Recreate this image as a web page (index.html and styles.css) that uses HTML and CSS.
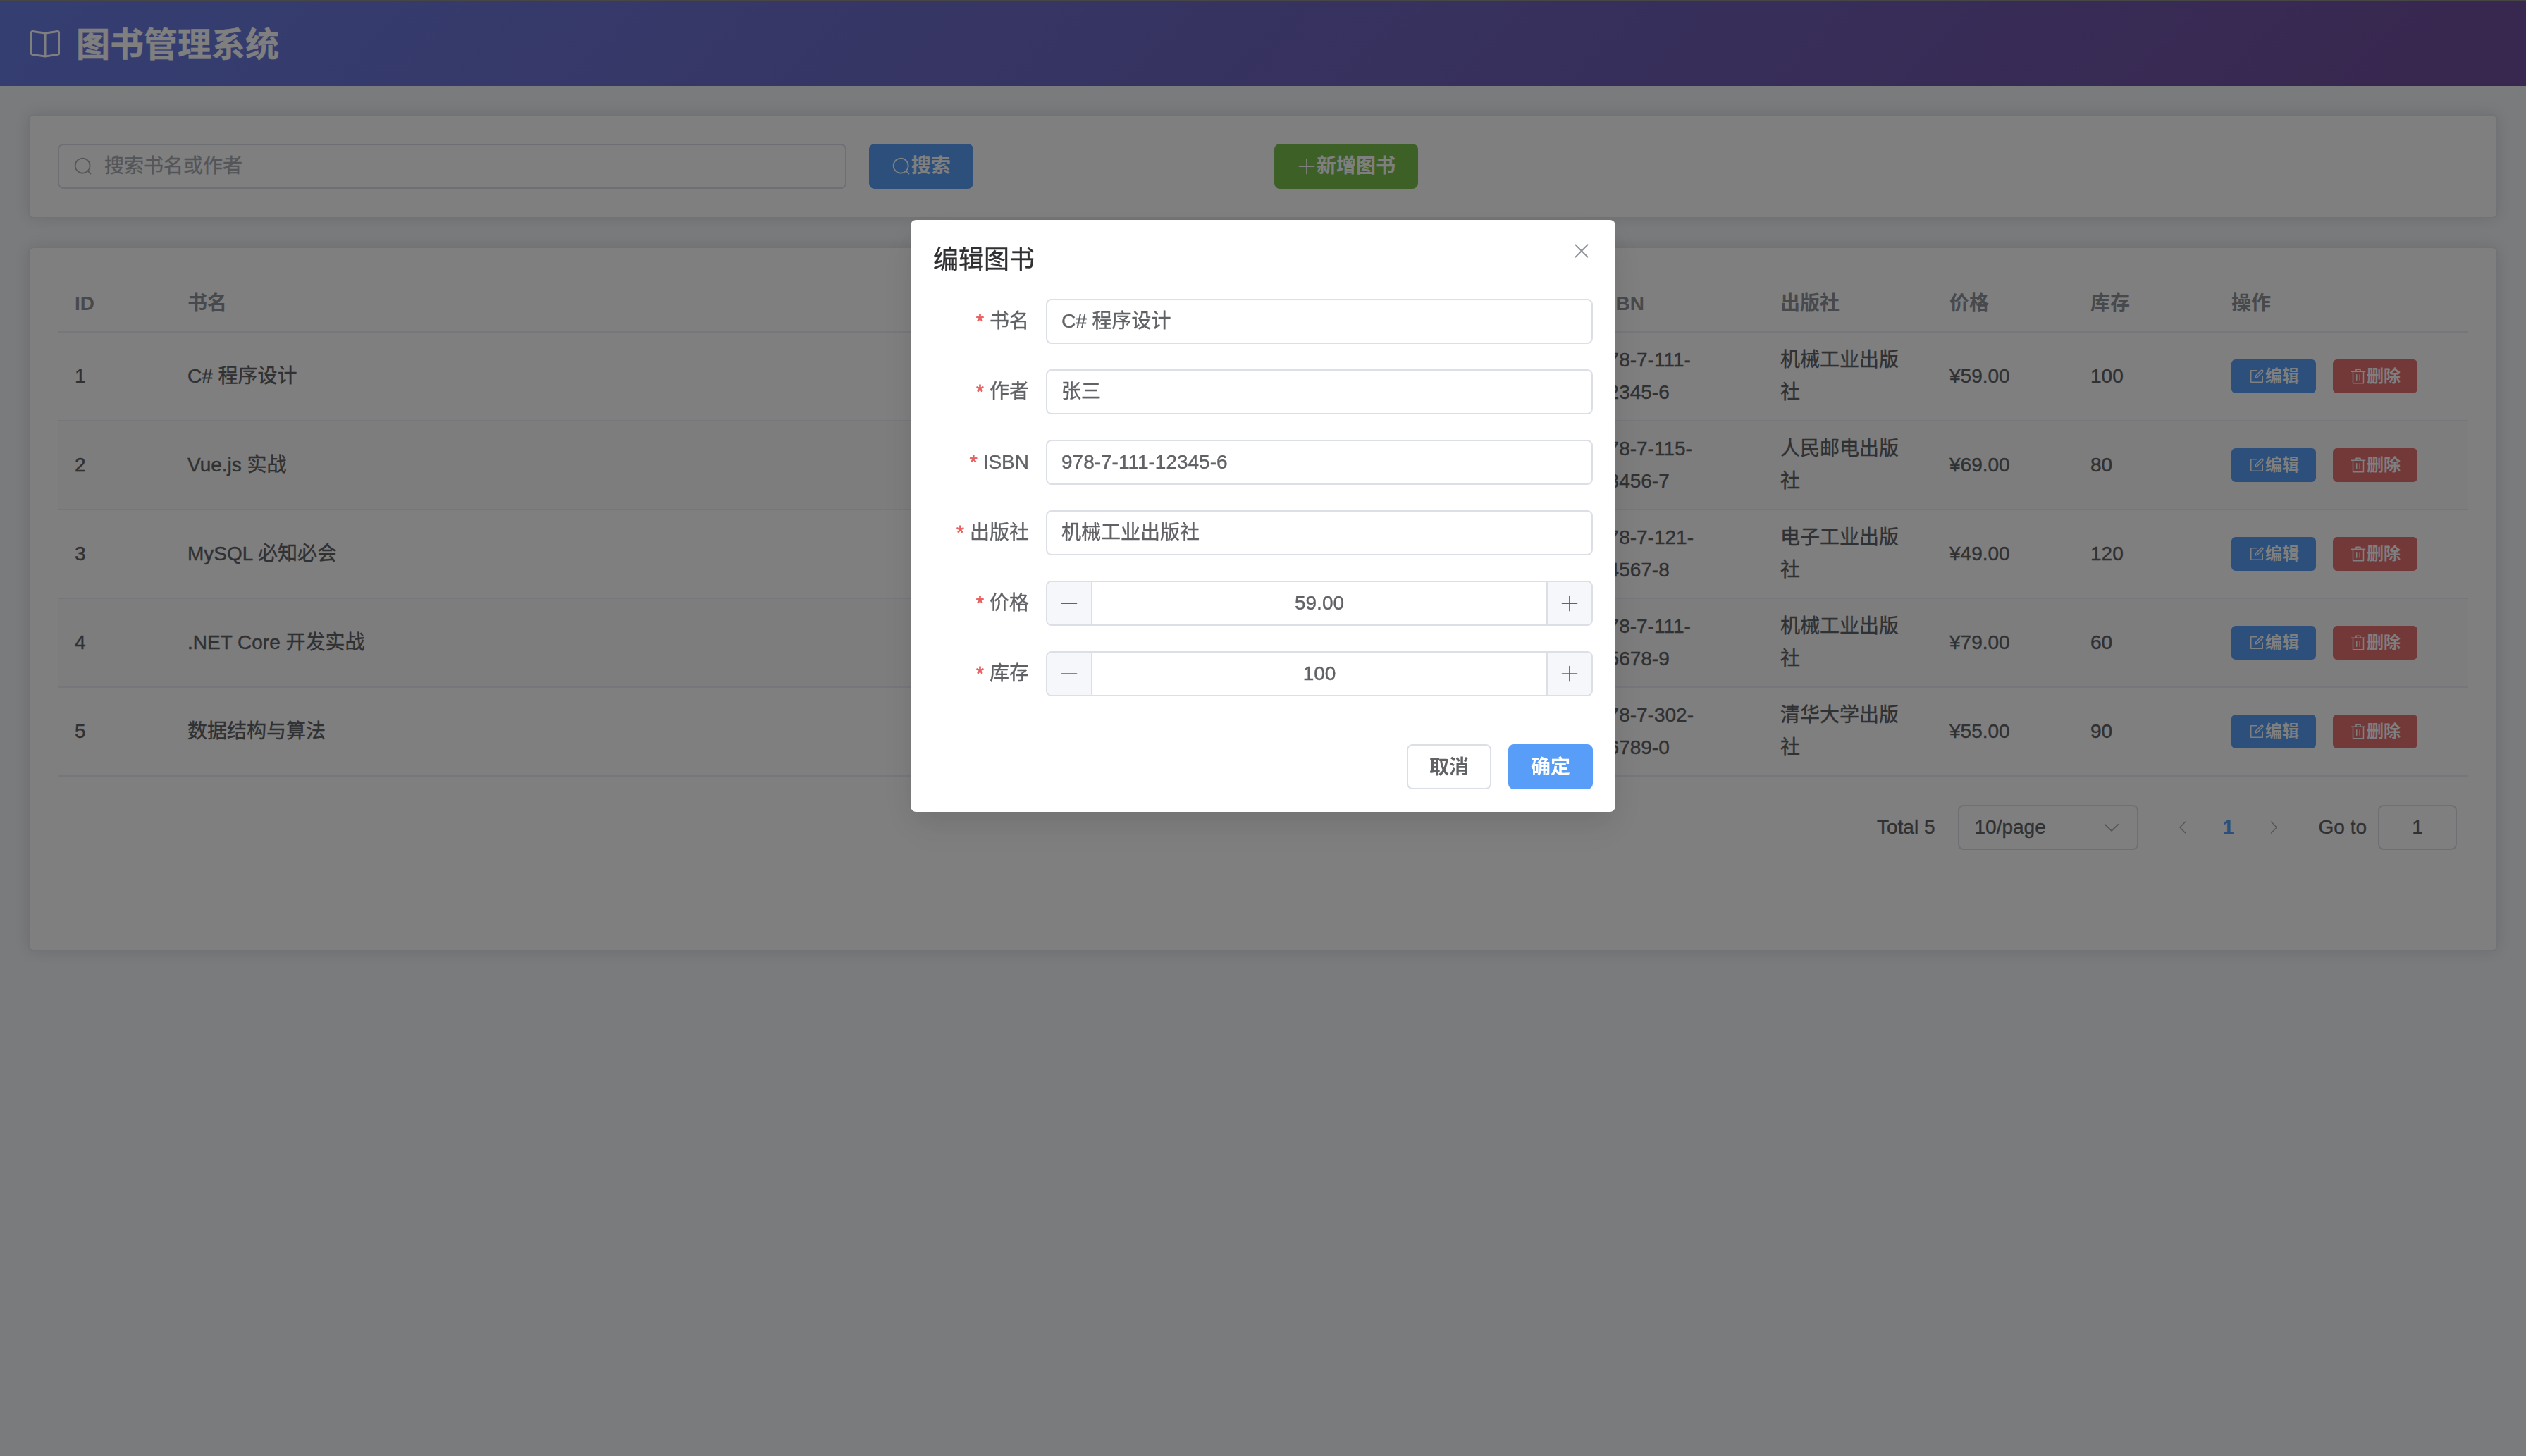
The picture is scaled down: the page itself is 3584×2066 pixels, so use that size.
FILE: index.html
```html
<!DOCTYPE html>
<html lang="zh-CN">
<head>
<meta charset="utf-8">
<title>图书管理系统</title>
<link rel="stylesheet" href="styles.css">
</head>
<body>
<svg class="sprite" aria-hidden="true">
  <symbol id="i-reading" viewBox="0 0 1024 1024"><path d="m512 863.36 384-54.848v-638.72L525.568 222.72a96 96 0 0 1-27.136 0L128 169.792v638.72zM137.024 106.432l370.432 52.928a32 32 0 0 0 9.088 0l370.432-52.928A64 64 0 0 1 960 169.792v638.72a64 64 0 0 1-54.976 63.36l-388.48 55.488a32 32 0 0 1-9.088 0l-388.48-55.488A64 64 0 0 1 64 808.512v-638.72a64 64 0 0 1 73.024-63.36"/><path d="M480 192h64v704h-64z"/></symbol>
  <symbol id="i-search" viewBox="0 0 1024 1024"><path d="m795.904 750.72 124.992 124.928a32 32 0 0 1-45.248 45.248L750.656 795.904a416 416 0 1 1 45.248-45.248zM480 832a352 352 0 1 0 0-704 352 352 0 0 0 0 704"/></symbol>
  <symbol id="i-plus" viewBox="0 0 1024 1024"><path d="M480 480V128a32 32 0 0 1 64 0v352h352a32 32 0 1 1 0 64H544v352a32 32 0 1 1-64 0V544H128a32 32 0 0 1 0-64z"/></symbol>
  <symbol id="i-minus" viewBox="0 0 1024 1024"><path d="M128 544h768a32 32 0 1 0 0-64H128a32 32 0 0 0 0 64"/></symbol>
  <symbol id="i-close" viewBox="0 0 1024 1024"><path d="M764.288 214.592 512 466.88 259.712 214.592a31.936 31.936 0 0 0-45.12 45.12L466.752 512 214.528 764.224a31.936 31.936 0 1 0 45.12 45.184L512 557.184l252.288 252.288a31.936 31.936 0 0 0 45.12-45.12L557.12 512.064l252.288-252.352a31.936 31.936 0 1 0-45.12-45.184z"/></symbol>
  <symbol id="i-down" viewBox="0 0 1024 1024"><path d="M831.872 340.864 512 652.672 192.128 340.864a30.592 30.592 0 0 0-42.752 0 29.12 29.12 0 0 0 0 41.6L489.664 714.24a32 32 0 0 0 44.672 0l340.288-331.712a29.12 29.12 0 0 0 0-41.728 30.592 30.592 0 0 0-42.752 0z"/></symbol>
  <symbol id="i-left" viewBox="0 0 1024 1024"><path d="M609.408 149.376 277.76 489.6a32 32 0 0 0 0 44.672l331.648 340.352a29.12 29.12 0 0 0 41.728 0 30.592 30.592 0 0 0 0-42.752L339.264 511.936l311.872-319.872a30.592 30.592 0 0 0 0-42.688 29.12 29.12 0 0 0-41.728 0z"/></symbol>
  <symbol id="i-right" viewBox="0 0 1024 1024"><path d="M340.864 149.312a30.592 30.592 0 0 0 0 42.752L652.736 512 340.864 831.872a30.592 30.592 0 0 0 0 42.752 29.12 29.12 0 0 0 41.728 0L714.24 534.336a32 32 0 0 0 0-44.672L382.592 149.376a29.12 29.12 0 0 0-41.728 0z"/></symbol>
  <symbol id="i-edit" viewBox="0 0 1024 1024"><path d="M832 512a32 32 0 1 1 64 0v352a32 32 0 0 1-32 32H160a32 32 0 0 1-32-32V160a32 32 0 0 1 32-32h352a32 32 0 0 1 0 64H192v640h640z"/><path d="m469.952 554.24 52.8-7.552L847.104 222.4a32 32 0 1 0-45.248-45.248L477.44 501.44l-7.552 52.8zm422.4-422.4a96 96 0 0 1 0 135.808l-331.84 331.84a32 32 0 0 1-18.112 9.088L436.8 623.68a32 32 0 0 1-36.224-36.224l15.104-105.6a32 32 0 0 1 9.024-18.112l331.904-331.84a96 96 0 0 1 135.744 0z"/></symbol>
  <symbol id="i-delete" viewBox="0 0 1024 1024"><path d="M160 256H96a32 32 0 0 1 0-64h256V95.936a32 32 0 0 1 32-32h256a32 32 0 0 1 32 32V192h256a32 32 0 1 1 0 64h-64v672a32 32 0 0 1-32 32H192a32 32 0 0 1-32-32zm448-64v-64H416v64zM224 896h576V256H224zm192-128a32 32 0 0 1-32-32V416a32 32 0 0 1 64 0v320a32 32 0 0 1-32 32m192 0a32 32 0 0 1-32-32V416a32 32 0 0 1 64 0v320a32 32 0 0 1-32 32"/></symbol>
</svg>

<div class="app">
  <header class="header">
    <svg class="icon"><use href="#i-reading"/></svg>
    <h1 class="header-title">图书管理系统</h1>
  </header>
  <main class="main">
    <section class="card toolbar">
      <div class="field field-search"><svg class="icon"><use href="#i-search"/></svg><span>搜索书名或作者</span></div>
      <div><button class="btn btn-primary"><svg class="icon"><use href="#i-search"/></svg>搜索</button></div>
      <div><button class="btn btn-success"><svg class="icon"><use href="#i-plus"/></svg>新增图书</button></div>
    </section>

    <section class="card books">
      <table class="table">
        <colgroup><col class="col-id"><col><col class="col-isbn"><col class="col-publisher"><col class="col-number"><col class="col-number"><col class="col-actions"></colgroup>
        <thead>
          <tr><th>ID</th><th>书名</th><th>ISBN</th><th>出版社</th><th>价格</th><th>库存</th><th>操作</th></tr>
        </thead>
        <tbody>
          <tr><td>1</td><td>C# 程序设计</td><td>978-7-111-12345-6</td><td>机械工业出版社</td><td>¥59.00</td><td>100</td><td><div class="actions"><button class="btn btn-small btn-primary"><svg class="icon"><use href="#i-edit"/></svg>编辑</button><button class="btn btn-small btn-danger"><svg class="icon"><use href="#i-delete"/></svg>删除</button></div></td></tr>
          <tr><td>2</td><td>Vue.js 实战</td><td>978-7-115-23456-7</td><td>人民邮电出版社</td><td>¥69.00</td><td>80</td><td><div class="actions"><button class="btn btn-small btn-primary"><svg class="icon"><use href="#i-edit"/></svg>编辑</button><button class="btn btn-small btn-danger"><svg class="icon"><use href="#i-delete"/></svg>删除</button></div></td></tr>
          <tr><td>3</td><td>MySQL 必知必会</td><td>978-7-121-34567-8</td><td>电子工业出版社</td><td>¥49.00</td><td>120</td><td><div class="actions"><button class="btn btn-small btn-primary"><svg class="icon"><use href="#i-edit"/></svg>编辑</button><button class="btn btn-small btn-danger"><svg class="icon"><use href="#i-delete"/></svg>删除</button></div></td></tr>
          <tr><td>4</td><td>.NET Core 开发实战</td><td>978-7-111-45678-9</td><td>机械工业出版社</td><td>¥79.00</td><td>60</td><td><div class="actions"><button class="btn btn-small btn-primary"><svg class="icon"><use href="#i-edit"/></svg>编辑</button><button class="btn btn-small btn-danger"><svg class="icon"><use href="#i-delete"/></svg>删除</button></div></td></tr>
          <tr><td>5</td><td>数据结构与算法</td><td>978-7-302-56789-0</td><td>清华大学出版社</td><td>¥55.00</td><td>90</td><td><div class="actions"><button class="btn btn-small btn-primary"><svg class="icon"><use href="#i-edit"/></svg>编辑</button><button class="btn btn-small btn-danger"><svg class="icon"><use href="#i-delete"/></svg>删除</button></div></td></tr>
        </tbody>
      </table>
      <nav class="pagination">
        <span>Total 5</span>
        <div class="field page-size"><span>10/page</span><svg class="icon"><use href="#i-down"/></svg></div>
        <div class="pager">
          <span class="pager-item pager-disabled"><svg class="icon"><use href="#i-left"/></svg></span>
          <span class="pager-item pager-active">1</span>
          <span class="pager-item pager-disabled"><svg class="icon"><use href="#i-right"/></svg></span>
        </div>
        <div class="jump"><span>Go to</span><div class="field jump-field">1</div></div>
      </nav>
    </section>
  </main>
</div>

<div class="overlay">
  <div class="dialog" role="dialog">
    <header class="dialog-title">编辑图书</header>
    <button class="dialog-close"><svg class="icon"><use href="#i-close"/></svg></button>
    <form class="form">
      <div class="form-item"><label class="label">书名</label><div class="field">C# 程序设计</div></div>
      <div class="form-item"><label class="label">作者</label><div class="field">张三</div></div>
      <div class="form-item"><label class="label">ISBN</label><div class="field">978-7-111-12345-6</div></div>
      <div class="form-item"><label class="label">出版社</label><div class="field">机械工业出版社</div></div>
      <div class="form-item"><label class="label">价格</label><div class="field stepper"><span class="step"><svg class="icon"><use href="#i-minus"/></svg></span><span class="step-value">59.00</span><span class="step"><svg class="icon"><use href="#i-plus"/></svg></span></div></div>
      <div class="form-item"><label class="label">库存</label><div class="field stepper"><span class="step"><svg class="icon"><use href="#i-minus"/></svg></span><span class="step-value">100</span><span class="step"><svg class="icon"><use href="#i-plus"/></svg></span></div></div>
    </form>
    <footer class="dialog-footer">
      <button class="btn"><span class="btn-text">取消</span></button>
      <button class="btn btn-primary"><span class="btn-text">确定</span></button>
    </footer>
  </div>
</div>
</body>
</html>
```
FILE: styles.css
```css
:root {
  --primary: #589ef8;
  --success: #7bc04e;
  --danger: #e77271;
  --text: #606266;
  --title: #303133;
  --muted: #909399;
  --placeholder: #a8abb2;
  --border: #dcdfe6;
  --border-light: #e4e7ed;
  --border-lighter: #ebeef5;
}

* {
  box-sizing: border-box;
}

body {
  margin: 0;
  height: 2066px;
  overflow: hidden;
  background: #f5f7fa;
  color: var(--text);
  font: 28px/46px "Liberation Sans", "Noto Sans CJK SC", sans-serif;
  -webkit-text-stroke: 0.4px currentColor;
}

.sprite {
  display: none;
}

.icon {
  width: 1em;
  height: 1em;
  flex: none;
  fill: currentColor;
}

.app {
  border-top: 2px solid #8c8c8c;
}

.header {
  display: flex;
  align-items: center;
  gap: 20px;
  height: 120px;
  padding: 0 40px;
  background: linear-gradient(135deg, #6a7de4 0%, #714e9d 100%);
  color: #fff;
  font-size: 48px;
}

.header-title {
  margin: 0;
  padding-top: 3px;
  font-size: 48px;
  line-height: 72px;
  font-weight: 700;
}

.main {
  display: flex;
  flex-direction: column;
  gap: 40px;
  padding: 40px;
}

.card {
  padding: 40px;
  border: 2px solid var(--border-light);
  border-radius: 8px;
  background: #fff;
  box-shadow: 0 0 24px rgba(0, 0, 0, 0.12);
}

.toolbar {
  display: grid;
  grid-template-columns: 8fr 4fr 12fr;
  margin: 0;
  padding-left: 24px;
  padding-right: 24px;
}

.toolbar > * {
  margin: 0 16px;
}

.field {
  display: flex;
  align-items: center;
  flex: 1;
  height: 64px;
  padding: 0 20px;
  border: 2px solid var(--border);
  border-radius: 8px;
  background: #fff;
}

.field-search {
  gap: 16px;
  color: var(--placeholder);
}

.btn {
  display: inline-flex;
  align-items: center;
  justify-content: center;
  height: 64px;
  padding: 0 30px;
  border: 2px solid var(--border);
  border-radius: 8px;
  background: #fff;
  color: var(--text);
  font: inherit;
  font-weight: 600;
  line-height: 28px;
  vertical-align: top;
  -webkit-text-stroke: 0;
}

.btn-text {
  padding-top: 2px;
}

.btn-primary {
  border-color: var(--primary);
  background: var(--primary);
  color: #fff;
}

.btn-success {
  border-color: var(--success);
  background: var(--success);
  color: #fff;
}

.btn-danger {
  border-color: var(--danger);
  background: var(--danger);
  color: #fff;
}

.btn-small {
  height: 48px;
  padding: 0 22px;
  border-radius: 6px;
  font-size: 24px;
  line-height: 24px;
}

.books {
  height: 1000px;
}

.table {
  width: 100%;
  table-layout: fixed;
  border-collapse: separate;
  border-spacing: 0;
  text-align: left;
}

.col-id { width: 160px; }
.col-isbn { width: 260px; }
.col-publisher { width: 240px; }
.col-number { width: 200px; }
.col-actions { width: 360px; }

.table th,
.table td {
  padding: 16px 24px;
  border-bottom: 2px solid var(--border-lighter);
}

.table th {
  color: var(--muted);
  font-weight: 600;
  -webkit-text-stroke: 0;
}

.table tbody tr:nth-child(even) {
  background: #fafafa;
}

.actions {
  display: flex;
  gap: 24px;
}

.pagination {
  display: flex;
  align-items: center;
  justify-content: flex-end;
  gap: 32px;
  margin-top: 40px;
  padding-right: 16px;
}

.page-size {
  flex: none;
  width: 256px;
  padding: 0 22px;
  justify-content: space-between;
}

.page-size .icon {
  color: var(--placeholder);
}

.pager {
  display: flex;
}

.pager-item {
  display: flex;
  align-items: center;
  justify-content: center;
  width: 64px;
  height: 64px;
}

.pager-active {
  color: var(--primary);
  font-weight: 700;
}

.pager-disabled {
  color: var(--placeholder);
  font-size: 24px;
}

.jump {
  display: flex;
  align-items: center;
  gap: 16px;
}

.jump-field {
  flex: none;
  width: 112px;
  justify-content: center;
}

.overlay {
  position: fixed;
  inset: 0;
  display: flex;
  justify-content: center;
  align-items: flex-start;
  padding-top: 312px;
  background: rgba(0, 0, 0, 0.5);
}

.dialog {
  position: relative;
  width: 1000px;
  padding: 32px;
  border-radius: 8px;
  background: #fff;
  box-shadow: 0 24px 64px 8px rgba(0, 0, 0, 0.04), 0 16px 40px rgba(0, 0, 0, 0.08);
}

.dialog-title {
  padding-top: 1px;
  padding-bottom: 31px;
  color: var(--title);
  font-size: 36px;
  line-height: 48px;
}

.dialog-close {
  position: absolute;
  top: 0;
  right: 0;
  display: flex;
  align-items: center;
  justify-content: center;
  width: 96px;
  height: 88px;
  padding: 0;
  border: 0;
  background: none;
  color: var(--muted);
  font-size: 32px;
}

.form-item {
  display: flex;
  margin-bottom: 36px;
}

.label {
  width: 160px;
  padding-right: 24px;
  line-height: 64px;
  text-align: right;
}

.label::before {
  content: "*";
  margin-right: 8px;
  color: #e8605f;
  -webkit-text-stroke: 0.8px currentColor;
}

.stepper {
  padding: 0;
  overflow: hidden;
}

.step {
  display: flex;
  align-items: center;
  justify-content: center;
  align-self: stretch;
  width: 64px;
  background: #f5f7fa;
}

.step:first-child {
  border-right: 2px solid var(--border);
}

.step:last-child {
  border-left: 2px solid var(--border);
}

.step-value {
  flex: 1;
  text-align: center;
}

.dialog-footer {
  display: flex;
  justify-content: flex-end;
  gap: 24px;
  padding-top: 32px;
}
```
